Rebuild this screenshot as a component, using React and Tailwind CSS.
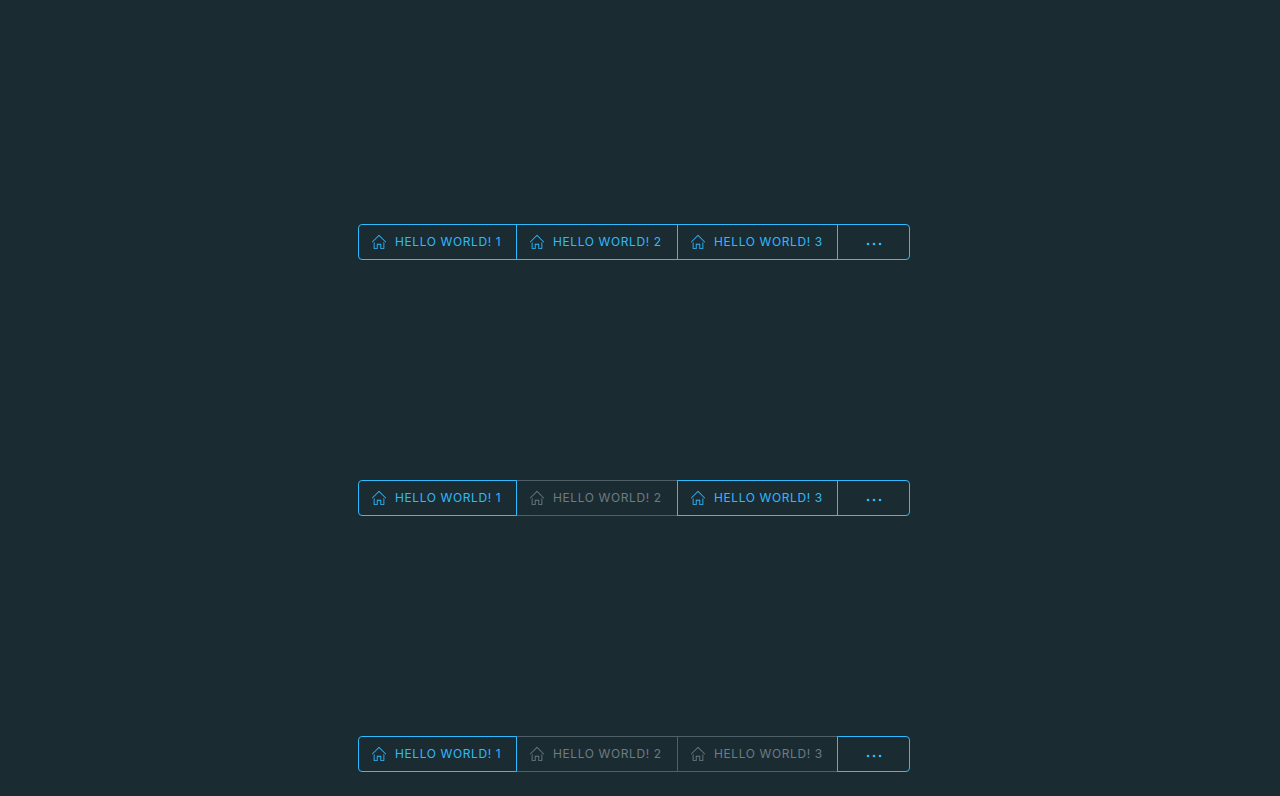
const rows = [
  { id: 'all-enabled', disabled: [] },
  { id: 'second-disabled', disabled: [2] },
  { id: 'two-disabled', disabled: [2, 3] },
];

const items = [
  { n: 1, width: 'w-[159px] rounded-l' },
  { n: 2, width: 'w-[162px] -ml-px' },
  { n: 3, width: 'w-[161px] -ml-px' },
];

const enabledStyle = 'relative z-10 border-[#2ebaff] text-[#2ebaff]';
const disabledStyle = 'border-[#4f6068] text-[#6b7c84]';

function HomeIcon() {
  return (
    <svg viewBox="0 0 36 36" className="size-4 shrink-0" fill="currentColor" aria-hidden="true">
      <path d="M33.71 17.29l-15-15a1 1 0 0 0-1.41 0l-15 15a1 1 0 0 0 1.41 1.41L18 4.41l14.29 14.3A1 1 0 0 0 33.71 17.29Z" />
      <path d="M28 32h-5V22H13v10H8V18L6 20V32a2 2 0 0 0 2 2h7V24h6v10h7a2 2 0 0 0 2-2V19.76l-2-2Z" />
    </svg>
  );
}

function DotsIcon() {
  return (
    <svg viewBox="0 0 16 16" className="size-4" fill="currentColor" aria-hidden="true">
      <circle cx="2" cy="10" r="1.3" />
      <circle cx="8" cy="10" r="1.3" />
      <circle cx="14" cy="10" r="1.3" />
    </svg>
  );
}

function ButtonGroup({ disabled }) {
  return (
    <div role="group" aria-label="Hello world actions" className="flex h-9 w-[552px]">
      {items.map(({ n, width }) => {
        const off = disabled.includes(n);
        return (
          <button
            key={n}
            type="button"
            disabled={off}
            className={`flex shrink-0 items-center gap-2 whitespace-nowrap border pl-3 text-xs uppercase tracking-wider ${width} ${off ? disabledStyle : enabledStyle}`}
          >
            <HomeIcon />
            Hello World! {n}
          </button>
        );
      })}
      <button
        type="button"
        aria-label="More actions"
        className={`-ml-px flex flex-1 items-center justify-center rounded-r border ${enabledStyle}`}
      >
        <DotsIcon />
      </button>
    </div>
  );
}

export default function App() {
  return (
    <main className="flex min-h-screen flex-col items-center gap-[220px] bg-[#1b2b32] pt-56 pr-3 pb-6 font-['Inter',sans-serif]">
      {rows.map((row) => (
        <ButtonGroup key={row.id} disabled={row.disabled} />
      ))}
    </main>
  );
}
